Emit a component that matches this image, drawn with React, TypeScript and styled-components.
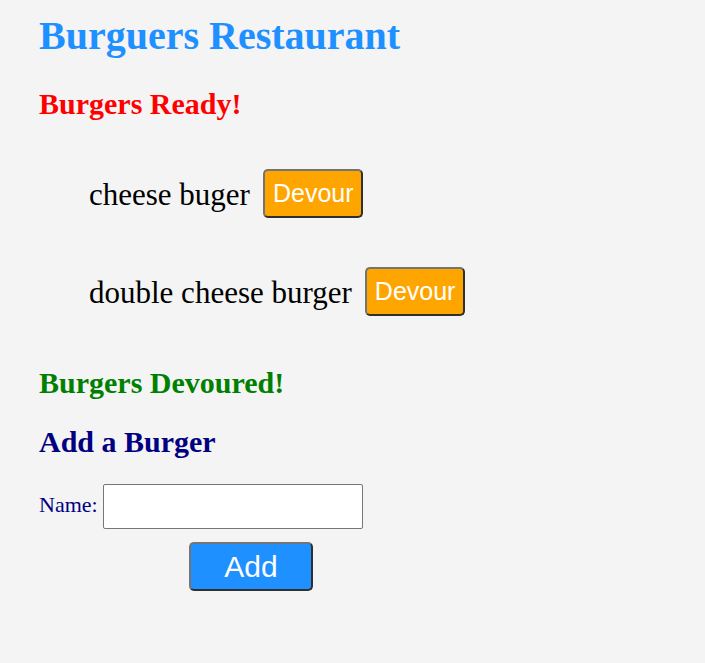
import React from "react";
import styled, { createGlobalStyle } from "styled-components";

const GlobalStyle = createGlobalStyle`
  html, body {
    margin: 0;
    padding: 0;
    background: #f4f4f4;
  }
  body {
    font-family: "Liberation Serif", "Times New Roman", serif;
    font-size: 20px;
  }
`;

const Page = styled.main`
  min-height: 663px;
  box-sizing: border-box;
  padding: 12px 0 0 39px;
  display: flex;
  flex-direction: column;
  align-items: flex-start;
`;

const Title = styled.h1`
  margin: 0;
  font-size: 40px;
  font-weight: bold;
  color: #1e90ff;
  line-height: normal;
`;

const Heading = styled.h2<{ $color: string; $top: number }>`
  margin: ${(p) => p.$top}px 0 0 0;
  font-size: 30px;
  font-weight: bold;
  color: ${(p) => p.$color};
  line-height: normal;
`;

const List = styled.ul`
  list-style: none;
  margin: 0;
  padding: 48px 0 50px 50px;
  display: flex;
  flex-direction: column;
  gap: 49px;
`;

const Item = styled.li`
  display: flex;
  align-items: center;
  gap: 13px;
  font-size: 31px;
  color: #000;
`;

const ItemName = styled.span`
  padding-top: 3px;
`;

const ActionButton = styled.button<{ $bg: string; $size: number }>`
  font-family: "Liberation Sans", Arial, sans-serif;
  font-size: ${(p) => p.$size}px;
  color: #fff;
  background: ${(p) => p.$bg};
  border-width: 2px;
  border-style: solid;
  border-color: #747474 #2f2f2f #2f2f2f #747474;
  border-radius: 5px;
  line-height: normal;
  cursor: pointer;
`;

const DevourButton = styled(ActionButton)`
  padding: 8px 8px;
  height: 49px;
  width: 100px;
`;

const AddButton = styled(ActionButton)`
  width: 124px;
  height: 49px;
  padding: 0;
  margin: 13px 0 0 150px;
`;

const Form = styled.form`
  margin-top: 25px;
  display: flex;
  flex-direction: column;
  align-items: flex-start;
`;

const FieldRow = styled.div`
  display: flex;
  align-items: center;
  gap: 5px;
`;

const Label = styled.label`
  font-size: 22px;
  color: #000080;
  padding-bottom: 4px;
`;

const Input = styled.input`
  box-sizing: border-box;
  width: 260px;
  height: 45px;
  border: 1px solid #767676;
  border-radius: 2px;
  background: #fff;
  font-size: 20px;
  padding: 4px 6px;
`;

const burgers = ["cheese buger", "double cheese burger"];

export default function App() {
  return (
    <>
      <GlobalStyle />
      <Page>
        <Title>Burguers Restaurant</Title>
        <Heading $color="#ff0000" $top={28}>
          Burgers Ready!
        </Heading>
        <List>
          {burgers.map((b) => (
            <Item key={b}>
              <ItemName>{b}</ItemName>
              <DevourButton type="button" $bg="#ffa500" $size={25}>
                Devour
              </DevourButton>
            </Item>
          ))}
        </List>
        <Heading $color="#008000" $top={0}>
          Burgers Devoured!
        </Heading>
        <Heading $color="#000080" $top={25}>
          Add a Burger
        </Heading>
        <Form onSubmit={(e) => e.preventDefault()}>
          <FieldRow>
            <Label htmlFor="name">Name:</Label>
            <Input id="name" type="text" />
          </FieldRow>
          <AddButton type="submit" $bg="#1e90ff" $size={30}>
            Add
          </AddButton>
        </Form>
      </Page>
    </>
  );
}
